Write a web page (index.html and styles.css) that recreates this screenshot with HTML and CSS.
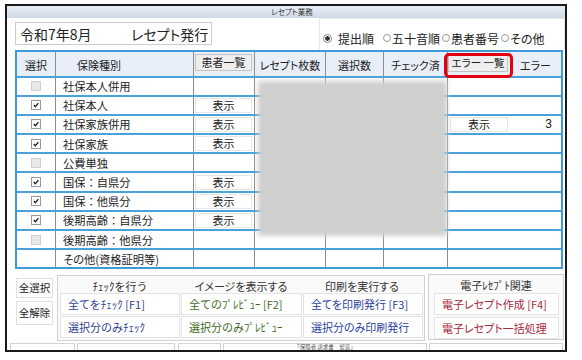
FILE: index.html
```html
<!DOCTYPE html>
<html lang="ja">
<head>
    <meta charset="UTF-8">
    <title>レセプト業務</title>
    <link rel="stylesheet" href="styles.css">
</head>
<body>

<div class="window">
    <div class="titlebar">レセプト業務</div>

    <div class="top">
        <div class="period">
            <span class="month">令和7年8月</span>
            <span>レセプト発行</span>
        </div>
        <div class="sort">
            <label class="opt first"><span class="radio on"></span>提出順</label>
            <label class="opt"><span class="radio"></span>五十音順</label>
            <label class="opt"><span class="radio"></span>患者番号</label>
            <label class="opt"><span class="radio"></span>その他</label>
        </div>
    </div>

    <div class="grid-wrap">
        <div class="grid">
            <div class="row head">
                <div class="cell center">選択</div>
                <div class="cell kind-head">保険種別</div>
                <div class="cell top-btn"><span class="hbtn">患者一覧</span></div>
                <div class="cell center">レセプト枚数</div>
                <div class="cell center">選択数</div>
                <div class="cell center">チェック済</div>
                <div class="cell top-btn no-line"><span class="hbtn err">エラー 一覧</span></div>
                <div class="cell center no-line">エラー</div>
            </div>

            <div class="row">
                <div class="cell center"><span class="box off"></span></div>
                <div class="cell kind">社保本人併用</div>
                <div class="cell"></div>
                <div class="cell"></div><div class="cell"></div><div class="cell"></div>
                <div class="cell no-line"></div><div class="cell no-line"></div>
            </div>
            <div class="row">
                <div class="cell center"><span class="box"><svg viewBox="0 0 9 9"><path d="M2 4.6 L3.8 6.4 L7.2 2.4"/></svg></span></div>
                <div class="cell kind">社保本人</div>
                <div class="cell"><span class="show">表示</span></div>
                <div class="cell"></div><div class="cell"></div><div class="cell"></div>
                <div class="cell no-line"></div><div class="cell no-line"></div>
            </div>
            <div class="row">
                <div class="cell center"><span class="box"><svg viewBox="0 0 9 9"><path d="M2 4.6 L3.8 6.4 L7.2 2.4"/></svg></span></div>
                <div class="cell kind">社保家族併用</div>
                <div class="cell"><span class="show">表示</span></div>
                <div class="cell"></div><div class="cell"></div><div class="cell"></div>
                <div class="cell no-line"><span class="show err-show">表示</span></div>
                <div class="cell no-line count">3</div>
            </div>
            <div class="row">
                <div class="cell center"><span class="box"><svg viewBox="0 0 9 9"><path d="M2 4.6 L3.8 6.4 L7.2 2.4"/></svg></span></div>
                <div class="cell kind">社保家族</div>
                <div class="cell"><span class="show">表示</span></div>
                <div class="cell"></div><div class="cell"></div><div class="cell"></div>
                <div class="cell no-line"></div><div class="cell no-line"></div>
            </div>
            <div class="row">
                <div class="cell center"><span class="box off"></span></div>
                <div class="cell kind">公費単独</div>
                <div class="cell"></div>
                <div class="cell"></div><div class="cell"></div><div class="cell"></div>
                <div class="cell no-line"></div><div class="cell no-line"></div>
            </div>
            <div class="row">
                <div class="cell center"><span class="box"><svg viewBox="0 0 9 9"><path d="M2 4.6 L3.8 6.4 L7.2 2.4"/></svg></span></div>
                <div class="cell kind">国保：自県分</div>
                <div class="cell"><span class="show">表示</span></div>
                <div class="cell"></div><div class="cell"></div><div class="cell"></div>
                <div class="cell no-line"></div><div class="cell no-line"></div>
            </div>
            <div class="row">
                <div class="cell center"><span class="box"><svg viewBox="0 0 9 9"><path d="M2 4.6 L3.8 6.4 L7.2 2.4"/></svg></span></div>
                <div class="cell kind">国保：他県分</div>
                <div class="cell"><span class="show">表示</span></div>
                <div class="cell"></div><div class="cell"></div><div class="cell"></div>
                <div class="cell no-line"></div><div class="cell no-line"></div>
            </div>
            <div class="row">
                <div class="cell center"><span class="box"><svg viewBox="0 0 9 9"><path d="M2 4.6 L3.8 6.4 L7.2 2.4"/></svg></span></div>
                <div class="cell kind">後期高齢：自県分</div>
                <div class="cell"><span class="show">表示</span></div>
                <div class="cell"></div><div class="cell"></div><div class="cell"></div>
                <div class="cell no-line"></div><div class="cell no-line"></div>
            </div>
            <div class="row">
                <div class="cell center"><span class="box off"></span></div>
                <div class="cell kind">後期高齢：他県分</div>
                <div class="cell"></div>
                <div class="cell"></div><div class="cell"></div><div class="cell"></div>
                <div class="cell no-line"></div><div class="cell no-line"></div>
            </div>
            <div class="row last">
                <div class="cell"></div>
                <div class="cell kind prop">その他(資格証明等)</div>
                <div class="cell"></div>
                <div class="cell"></div><div class="cell"></div><div class="cell"></div>
                <div class="cell no-line"></div><div class="cell no-line"></div>
            </div>
        </div>
        <div class="mask"></div>
        <div class="mark"></div>
    </div>

    <div class="commands">
        <div class="select-btns">
            <span class="sbtn">全選択</span>
            <span class="sbtn tall">全解除</span>
        </div>

        <div class="group">
            <div class="group-head">
                <span class="hw">ﾁｪｯｸを行う</span>
                <span>イメージを表示する</span>
                <span>印刷を実行する</span>
            </div>
            <div class="group-btns">
                <span class="cbtn check hw">全てをﾁｪｯｸ [F1]</span>
                <span class="cbtn preview hw">全てのﾌﾟﾚﾋﾞｭｰ [F2]</span>
                <span class="cbtn print">全てを印刷発行 [F3]</span>
                <span class="cbtn check hw">選択分のみﾁｪｯｸ</span>
                <span class="cbtn preview hw">選択分のみﾌﾟﾚﾋﾞｭｰ</span>
                <span class="cbtn print">選択分のみ印刷発行</span>
            </div>
        </div>

        <div class="ebox">
            <div class="group-head hw">電子ﾚｾﾌﾟﾄ関連</div>
            <span class="ebtn">電子レセプト作成 [F4]</span>
            <span class="ebtn">電子レセプト一括処理</span>
        </div>
    </div>

    <div class="lower">
        <div class="lbox w1"></div>
        <div class="lbox w2"></div>
        <div class="lbox w3"></div>
        <div class="lbox w4">「保険者 請求書　留意」</div>
        <div class="lbox w5"></div>
    </div>
</div>

</body>
</html>
```

FILE: styles.css
```css
body {
    margin: 0;
    background: #fff;
    font-family: "Noto Sans CJK JP", "Noto Sans", sans-serif;
    font-feature-settings: "palt";
    color: #222;
}

/* half-width kana keep their own width */
.hw {
    font-feature-settings: normal;
}

.window {
    margin: 4px 0 0 5px;
    width: 562px;
    height: 348px;
    box-sizing: border-box;
    border: 2px solid #1a1a1a;
    overflow: hidden;
    background: #fff;
}

.titlebar {
    height: 12px;
    background: linear-gradient(#e7edf4, #cfdae7);
    font-size: 7.5px;
    line-height: 12px;
    text-align: center;
    padding-left: 12px;
    color: #333;
}

/* header area */
.top {
    display: flex;
    height: 32px;
}

.period {
    margin: 4px 0 0 8px;
    width: 197px;
    height: 23px;
    box-sizing: border-box;
    border: 1px solid #cdcdcd;
    display: flex;
    align-items: center;
    padding-left: 4px;
    font-size: 14px;
}

.period .month {
    width: 111px;
}

.sort {
    margin-left: auto;
    width: 246px;
    box-sizing: border-box;
    border: 1px solid #e8e8e8;
    border-bottom: none;
    display: flex;
    align-items: center;
    padding: 7px 0 0 3px;
    font-size: 12px;
}

.opt {
    display: flex;
    align-items: center;
    gap: 1px;
    margin-right: 2px;
}

.opt.first {
    gap: 6px;
    margin-right: 9px;
}

.radio {
    width: 6px;
    height: 6px;
    border: 1px solid #9a9a9a;
    border-radius: 50%;
    background: #fff;
}

.radio.on {
    width: 7px;
    height: 7px;
    border-color: #888;
    background: radial-gradient(circle, #333 0 2px, #fff 2.5px);
}

/* list */
.grid-wrap {
    position: relative;
    margin-left: 8px;
    width: 548px;
}

.grid {
    border: 2px solid #3f9bd7;
}

.row {
    display: grid;
    grid-template-columns: 39px 138px 61px 71px 58px 64px 62px 51px;
    height: 19.2px;
    box-sizing: border-box;
    border-bottom: 2px solid #4aa1db;
}

.row.head {
    height: 25.5px;
    background: #e9eff9;
}

.row.last {
    height: 17px;
    border-bottom: none;
}

.cell {
    border-right: 1px solid #8d8d8d;
    display: flex;
    align-items: center;
    font-size: 11.5px;
    overflow: hidden;
    white-space: nowrap;
}

.cell.no-line {
    border-right: none;
}

.cell.center {
    justify-content: center;
}

.head .cell {
    font-size: 11px;
    padding-top: 3px;
    box-sizing: border-box;
}

.head .cell.kind-head {
    padding-left: 21px;
}

.head .cell.top-btn {
    align-items: flex-start;
    padding-top: 2px;
}

.hbtn {
    display: block;
    margin-left: 1px;
    width: 57px;
    height: 17px;
    box-sizing: border-box;
    border: 1px solid #c4c4c4;
    background: #eeeeee;
    text-align: center;
    line-height: 15px;
    font-size: 11px;
}

.hbtn.err {
    margin-left: 0;
    width: 60px;
    height: 18px;
    font-size: 10.5px;
}

/* red highlight drawn over the header button */
.mark {
    position: absolute;
    left: 429px;
    top: 3px;
    width: 69px;
    height: 25px;
    box-sizing: border-box;
    border: 3px solid #e3000f;
    border-radius: 5px;
}

.cell.kind {
    padding-left: 7px;
    font-size: 11.25px;
    font-feature-settings: normal;
}

.cell.kind.prop {
    font-feature-settings: "palt";
}

.box {
    width: 8px;
    height: 8px;
    border: 1px solid #9b9b9b;
    background: #fff;
    display: flex;
}

.box svg {
    width: 8px;
    height: 8px;
    fill: none;
    stroke: #222;
    stroke-width: 1.5;
}

.box.off {
    border-color: #d0d0d0;
    background: #e8e8e8;
}

.show {
    display: block;
    margin-left: 1px;
    width: 57px;
    height: 15px;
    box-sizing: border-box;
    border: 1px solid #e6e6e6;
    background: #fff;
    text-align: center;
    line-height: 13px;
    font-size: 11px;
}

.show.err-show {
    margin-left: 2px;
    width: 58px;
}

.cell.count {
    justify-content: flex-end;
    padding-right: 9px;
    font-family: "Liberation Sans", sans-serif;
    font-size: 12px;
}

.mask {
    position: absolute;
    left: 243px;
    top: 31px;
    width: 189px;
    height: 155px;
    background: #d0cfcf;
    filter: blur(2.5px);
}

/* command buttons */
.commands {
    display: flex;
    align-items: flex-start;
    margin-top: 5px;
    height: 67px;
}

.select-btns {
    display: flex;
    flex-direction: column;
    gap: 3px;
    margin: 4px 0 0 9px;
    width: 37px;
}

.sbtn {
    height: 20px;
    box-sizing: border-box;
    border: 1px solid #e0e0e0;
    background: #fff;
    font-size: 10.5px;
    line-height: 18px;
    text-align: center;
}

.sbtn.tall {
    height: 24px;
    line-height: 22px;
}

.group {
    margin: 1px 0 0 4px;
    width: 368px;
    height: 66px;
    box-sizing: border-box;
    border: 1px solid #d2d2d2;
    background: #fafafa;
    padding-left: 2px;
}

.group-head {
    display: grid;
    grid-template-columns: 120px 122px 120px;
    height: 17px;
    font-size: 11px;
    line-height: 20px;
    text-align: center;
    color: #333;
}

.group-btns {
    display: grid;
    grid-template-columns: 120px 121px 120px;
    grid-auto-rows: 22px;
    gap: 1px;
}

.cbtn,
.ebtn {
    display: block;
    box-sizing: border-box;
    border: 1px solid #e4e4e4;
    background: #fff;
    padding-left: 7px;
    font-size: 11px;
    line-height: 20px;
    white-space: nowrap;
}

.cbtn.check {
    color: #334190;
}

.cbtn.preview {
    color: #3f6a25;
}

.cbtn.print {
    color: #2b3f9c;
}

.ebox {
    margin-left: 3px;
    width: 136px;
    height: 66px;
    box-sizing: border-box;
    border: 1px solid #cfcfcf;
    background: #fafafa;
    padding-left: 5px;
}

.ebox .group-head {
    display: block;
    padding-right: 5px;
    height: 18px;
}

.ebtn {
    width: 125px;
    height: 22px;
    margin-bottom: 2px;
    color: #a8283c;
}

.lower {
    display: flex;
    margin-top: 2px;
    height: 7px;
    overflow: hidden;
}

.lbox {
    box-sizing: border-box;
    border: 1px solid #d3d3d3;
    border-bottom: none;
    height: 7px;
}

.lbox.w1 { margin-left: 3px; width: 65px; }
.lbox.w2 { margin-left: 2px; width: 98px; }
.lbox.w3 { margin-left: 3px; width: 43px; }
.lbox.w4 {
    margin-left: 2px;
    width: 204px;
    text-align: center;
    font-size: 5.5px;
    line-height: 6px;
    color: #555;
}
.lbox.w5 { margin-left: 2px; width: 134px; }
```
